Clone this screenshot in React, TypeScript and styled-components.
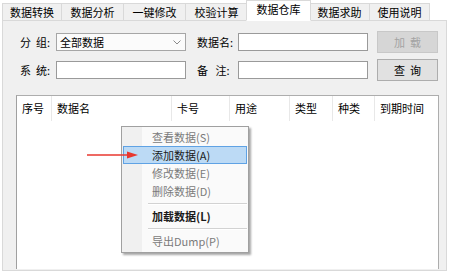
import React from 'react'
import styled, { createGlobalStyle } from 'styled-components'

const GlobalStyle = createGlobalStyle`
  html, body {
    margin: 0;
    padding: 0;
    background: #fff;
  }
  body {
    font-family: "Noto Sans CJK SC", "Noto Sans", sans-serif;
    font-size: 11px;
    color: #000;
  }
`

const Window = styled.div`
  width: 451px;
  height: 274px;
  box-sizing: border-box;
  padding: 0 4px 3px 2px;
  display: flex;
  flex-direction: column;
  background: #fff;
`

const TabStrip = styled.div`
  display: flex;
  align-items: flex-end;
  height: 21px;
  margin-bottom: -1px;
  position: relative;
  z-index: 1;
`

const Tab = styled.div<{ $active?: boolean; $w: number }>`
  box-sizing: border-box;
  width: ${p => p.$w}px;
  height: ${p => (p.$active ? 21 : 18)}px;
  margin-left: ${p => (p.$active ? -2 : -1)}px;
  margin-right: ${p => (p.$active ? -1 : 0)}px;
  border: 1px solid #d9d9d9;
  border-bottom: ${p => (p.$active ? '1px solid #fff' : '1px solid #d9d9d9')};
  background: ${p => (p.$active ? '#fff' : '#f0f0f0')};
  display: flex;
  align-items: center;
  justify-content: center;
  line-height: 1;
  padding-bottom: ${p => (p.$active ? 3 : 0)}px;
  position: relative;
  z-index: ${p => (p.$active ? 2 : 0)};

  &:first-child {
    margin-left: 0;
  }
`

const Panel = styled.div`
  flex: 1;
  display: flex;
  flex-direction: column;
  background: #f0f0f0;
  border: 1px solid #d9d9d9;
  padding: 10px 7px 1px 13px;
  min-height: 0;
`

const Form = styled.div`
  display: grid;
  grid-template-columns: 36px 141px 41px 139px 61px;
  grid-auto-rows: 22px;
  row-gap: 6px;
  align-items: center;
  margin-left: 4px;
`

const Label = styled.span`
  white-space: pre;
  line-height: 1;
`

const TextBox = styled.div`
  box-sizing: border-box;
  width: 130px;
  height: 18px;
  background: #fff;
  border: 1px solid #9a9a9a;
`

const Combo = styled(TextBox)`
  display: flex;
  align-items: center;
  justify-content: space-between;
  padding: 0 4px 0 3px;
  background: #fbfbfb;
  border-color: #a6a6a6;
  line-height: 1;
`

const Button = styled.div<{ $disabled?: boolean }>`
  box-sizing: border-box;
  height: 22px;
  display: flex;
  align-items: center;
  justify-content: center;
  white-space: pre;
  line-height: 1;
  background: ${p => (p.$disabled ? '#d6d6d6' : '#e1e1e1')};
  border: 1px solid ${p => (p.$disabled ? '#c8c8c8' : '#adadad')};
  color: ${p => (p.$disabled ? '#a3a3a3' : '#000')};
`

const List = styled.div`
  flex: 1;
  margin-top: 14px;
  background: #fff;
  border: 1px solid #adadad;
  border-left-color: #a0a0a0;
  border-bottom: none;
  position: relative;
`

const HeaderRow = styled.div`
  display: flex;
  height: 25px;
`

const HeaderCell = styled.div<{ $w: number; $last?: boolean }>`
  box-sizing: border-box;
  width: ${p => p.$w}px;
  flex-shrink: 0;
  padding-left: 5px;
  display: flex;
  align-items: center;
  line-height: 1;
  border-right: ${p => (p.$last ? 'none' : '1px solid #e8e8e8')};
`

const Menu = styled.div`
  position: absolute;
  left: 104px;
  top: 30px;
  width: 128px;
  box-sizing: border-box;
  padding: 1px 0 2px;
  border: 1px solid #a0a0a0;
  background: linear-gradient(to right, #f0f0f0 0 20px, #fafafa 20px);
  box-shadow: 2px 2px 2px rgba(0, 0, 0, 0.35);
  z-index: 2;
`

const MenuItem = styled.div<{ $disabled?: boolean; $active?: boolean; $bold?: boolean }>`
  box-sizing: border-box;
  height: 18px;
  margin: 0 1px;
  padding-left: 28px;
  display: flex;
  align-items: center;
  line-height: 1;
  color: ${p => (p.$disabled ? '#7a7a7a' : '#1a1a1a')};
  font-weight: ${p => (p.$bold ? 700 : 400)};
  background: ${p => (p.$active ? '#bcdaf5' : 'transparent')};
  border: 1px solid ${p => (p.$active ? '#5fa2e4' : 'transparent')};
`

const Separator = styled.div`
  height: 1px;
  margin: 3px 1px 2px 26px;
  background: #d2d2d2;
  border-bottom: 1px solid #fff;
`

const Pointer = styled.svg`
  position: absolute;
  left: 70px;
  top: 54px;
  z-index: 3;
`

const tabs = [
  { label: '数据转换', w: 60 },
  { label: '数据分析', w: 63 },
  { label: '一键修改', w: 63 },
  { label: '校验计算', w: 63 },
  { label: '数据仓库', w: 65, active: true },
  { label: '数据求助', w: 61 },
  { label: '使用说明', w: 61 },
]

const columns = [
  { label: '序号', w: 35 },
  { label: '数据名', w: 120 },
  { label: '卡号', w: 58 },
  { label: '用途', w: 60 },
  { label: '类型', w: 43 },
  { label: '种类', w: 42 },
  { label: '到期时间', w: 62 },
]

const App: React.FC = () => {
  return (
    <>
      <GlobalStyle />
      <Window>
        <TabStrip>
          {tabs.map(t => (
            <Tab key={t.label} $w={t.w} $active={t.active}>{t.label}</Tab>
          ))}
        </TabStrip>
        <Panel>
          <Form>
            <Label>分  组:</Label>
            <Combo>
              <span>全部数据</span>
              <svg width="8" height="5" viewBox="0 0 8 5">
                <path d="M0.5 0.5 L4 4 L7.5 0.5" fill="none" stroke="#8a8a8a" strokeWidth="1" />
              </svg>
            </Combo>
            <Label>数据名:</Label>
            <TextBox />
            <Button $disabled>加  载</Button>
            <Label>系  统:</Label>
            <TextBox />
            <Label>备   注:</Label>
            <TextBox />
            <Button>查  询</Button>
          </Form>
          <List>
            <HeaderRow>
              {columns.map((c, i) => (
                <HeaderCell key={c.label} $w={c.w} $last={i === columns.length - 1}>{c.label}</HeaderCell>
              ))}
            </HeaderRow>
            <Pointer width="52" height="10" viewBox="0 0 52 10">
              <line x1="0" y1="5" x2="42" y2="5" stroke="#e8372f" strokeWidth="1.3" />
              <path d="M40 1.5 L51 5 L40 8.5 Z" fill="#e8372f" />
            </Pointer>
            <Menu>
              <MenuItem $disabled>查看数据(S)</MenuItem>
              <MenuItem $active>添加数据(A)</MenuItem>
              <MenuItem $disabled>修改数据(E)</MenuItem>
              <MenuItem $disabled>删除数据(D)</MenuItem>
              <Separator />
              <MenuItem $bold>加载数据(L)</MenuItem>
              <Separator />
              <MenuItem $disabled>导出Dump(P)</MenuItem>
            </Menu>
          </List>
        </Panel>
      </Window>
    </>
  )
}

export default App
